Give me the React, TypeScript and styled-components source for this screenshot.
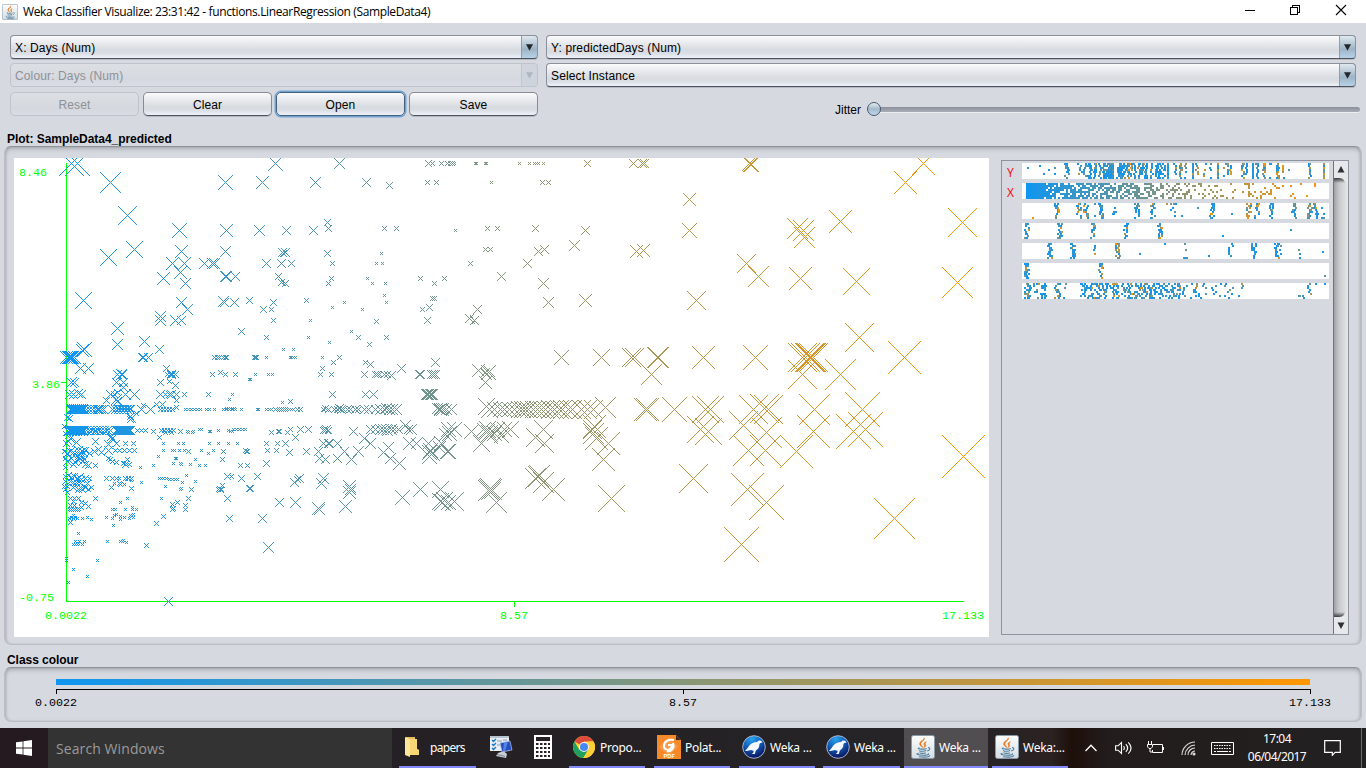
import React from "react";
import styled, { createGlobalStyle, css } from "styled-components";

const Global = createGlobalStyle`
  * { box-sizing: border-box; }
  html, body { margin: 0; padding: 0; overflow: hidden; }
  body { font-family: "Liberation Sans", Arial, sans-serif; font-size: 12px; color: #000; }
  svg { display: block; flex: none; }
`;

const Screen = styled.div`
  width: 1366px; height: 768px; display: flex; flex-direction: column; background: #d6d9e0; overflow: hidden;
`;
const TitleBar = styled.header`
  height: 23px; flex: none; background: #fff; display: flex; align-items: center; padding-left: 2px;
`;
const TitleText = styled.span`
  flex: 1; margin-left: 5px; font: 12px/22px "Open Sans", "Noto Sans", sans-serif; letter-spacing: -0.37px; white-space: pre;
`;
const WindowButtons = styled.div`
  display: flex; width: 138px; height: 23px;
  svg { width: 46px; height: 23px; }
`;

const Controls = styled.section`
  display: flex; gap: 8px; height: 93px; flex: none; padding: 12px 0 0 10px;
`;
const ControlColumn = styled.div<{ $w: number }>`
  width: ${p => p.$w}px; display: flex; flex-direction: column; gap: 4px; flex: none;
`;
const glossy = css`
  background: linear-gradient(#fbfbfc 0, #e9ebef 30%, #d8dbdf 62%, #d9dde4 78%, #eef1f8 100%);
`;
const Combo = styled.div<{ $disabled?: boolean }>`
  height: 24px; flex: none; display: flex; align-items: stretch; border-radius: 4px; overflow: hidden;
  border: 1px solid #8b909a; border-bottom-color: #4c515b; ${glossy}
  font-size: 12px; line-height: 24px; letter-spacing: 0.13px; padding-left: 4px;
  box-shadow: 0 1px 0 rgba(120, 125, 135, 0.35);
  ${p => p.$disabled && css`color: #8e9199; background: linear-gradient(#dcdfe4, #d5d8de 70%, #dadde5); border-color: #bfc3ca; box-shadow: none;`}
`;
const ComboText = styled.span`flex: 1; white-space: pre;`;
const ComboArrow = styled.span<{ $disabled?: boolean }>`
  width: 17px; margin: -1px; display: flex; align-items: center; justify-content: center;
  border: 1px solid #5d7d95; border-bottom-color: #1d3f5b; border-radius: 0 4px 4px 0;
  border-left-color: #8b9fae;
  background: linear-gradient(#dfe8ee 0, #adc0cf 45%, #9db4c7 60%, #b9d2e8 100%);
  ${p => p.$disabled && css`background: #cdd3dc; border-color: #bcc3cd; opacity: 0.85;`}
`;
const ButtonRow = styled.div`display: flex; gap: 4px; margin-top: 1px;`;
const PushButton = styled.div<{ $disabled?: boolean; $focused?: boolean }>`
  flex: 1; height: 24px; border-radius: 5px; text-align: center; line-height: 24px; letter-spacing: 0.1px;
  border: 1px solid #868b95; border-bottom: 1px solid #4d525c; ${glossy}
  box-shadow: 0 1px 0 rgba(120, 125, 135, 0.35);
  ${p => p.$disabled && css`color: #8e9199; background: linear-gradient(#dcdfe4, #d4d7dd 70%, #dadde5); border-color: #bfc3ca; box-shadow: none;`}
  ${p => p.$focused && css`border-color: #42617f; box-shadow: 0 0 0 1.5px #73a4d1;`}
`;
const JitterRow = styled.div`
  display: flex; align-items: center; height: 16px; margin: 11px -4px 0 289px; gap: 5px;
`;
const Slider = styled.div`
  flex: 1; height: 16px; display: flex; align-items: center; padding-left: 1px; margin-top: -1px;
`;
const SliderTrack = styled.div`
  height: 5px; flex: 1; border-radius: 3px; margin-left: -8px;
  background: linear-gradient(#8c909a, #a9adb8); box-shadow: 0 1px 0 #eceef0;
`;
const SliderThumb = styled.div`
  width: 14px; height: 14px; border-radius: 50%; border: 1px solid #45596e; z-index: 1;
  background: linear-gradient(#e5ecf1, #a4b9ca 50%, #c2d8eb);
`;

const GroupTitle = styled.h2`
  margin: 0; height: 30px; padding: 16px 0 0 7px; font: bold 12px/15px "Liberation Sans", Arial, sans-serif; letter-spacing: -0.05px; flex: none;
`;
const ClassTitle = styled(GroupTitle)`height: 22px; padding-top: 8px;`;
const GroupBox = styled.section<{ $h: number }>`
  height: ${p => p.$h}px; margin: 0 4px; flex: none; display: flex; border-radius: 7px;
  border: 1px solid #bbbec3; border-top: 1px solid #8f9296;
  box-shadow: inset 0 3px 4px -1px rgba(130, 133, 138, 0.5), inset 2px 0 3px -1px rgba(130, 133, 138, 0.4), inset -2px 0 3px -1px rgba(130, 133, 138, 0.4);
`;
const PlotBox = styled(GroupBox)`padding: 11px 12px 7px 9px; gap: 12px;`;
const PlotCanvas = styled.div`width: 975px; height: 479px; background: #fff; flex: none;`;
const AttributePanel = styled.div`
  width: 348px; height: 475px; margin-top: 2px; border: 1px solid #8f939d; display: flex; flex: none;
`;
const AttributeList = styled.div`
  flex: 1; display: flex; flex-direction: column; gap: 4px; padding-top: 2px;
`;
const AttributeRow = styled.div`display: flex; height: 16px;`;
const AttributeMark = styled.span`
  width: 20px; padding-left: 5px; color: #f00; font: 12px/20px "Open Sans", "Noto Sans", sans-serif;
`;
const Strip = styled.div`width: 307px; height: 16px; background: #fff;`;
const ScrollBar = styled.div`
  width: 15px; border-left: 1px solid #6f737a; display: flex; flex-direction: column; justify-content: space-between;
  background: linear-gradient(90deg, #9fa1a5, #c6c8cb 35%, #dcdddf 80%, #e7e8ea);
`;

const Taskbar = styled.footer`
  margin-top: 6px; height: 40px; flex: none; display: flex; background: linear-gradient(90deg, #241a20 0, #242023 28%, #262427 70%, #2b2221 77%, #1d0f0a 78.5%, #231c1c 81%, #222122 100%);
  color: #fff; font: 12px/38px "Noto Sans", "Open Sans", sans-serif;
`;
const StartButton = styled.div`width: 48px; padding: 12px 0 0 16px;`;
const SearchBox = styled.div`width: 344px; background: #333; color: #9a9a9a; font: 14px/41px "Open Sans", "Noto Sans", sans-serif; letter-spacing: 0.09px; padding-left: 8px;`;
const Task = styled.div<{ $w: number; $ml?: number; $pad?: number; $gap?: number; $active?: boolean; $running?: boolean }>`
  width: ${p => p.$w}px; margin-left: ${p => p.$ml ?? 0}px; padding-left: ${p => p.$pad ?? 3}px; flex: none;
  display: flex; align-items: center; gap: ${p => p.$gap ?? 5}px; white-space: pre; letter-spacing: -0.25px;
  background: ${p => (p.$active ? "#504e51" : "transparent")};
  border-bottom: 2px solid ${p => (p.$running ? "#8388fa" : "transparent")};
`;
const TaskLabel = styled.span<{ $tight?: boolean }>`
  line-height: 36px; padding-top: 2px; letter-spacing: ${p => (p.$tight ? "-0.7px" : "-0.25px")};
`;
const Tray = styled.div`display: flex; align-items: center; margin-left: 17px;`;
const TrayIcon = styled.div<{ $w: number }>`width: ${p => p.$w}px; flex: none; display: flex; justify-content: center;`;
const Clock = styled.div`
  width: 72px; flex: none; text-align: center; line-height: 18px; letter-spacing: -0.55px; padding-bottom: 1px; margin-left: 10px;
`;
const DesktopEdge = styled.div`margin-left: auto; width: 5px; flex: none; border-left: 1px solid #68676a;`;

/* ---------- plot data ---------- */

type Cross = [number, number, number];

const shade = (t: number) => {
  const k = Math.max(0, Math.min(1, t));
  return `rgb(${Math.round(15 + 240 * k)},150,${Math.round(240 - 240 * k)})`;
};

/* Points are stored in thirds of a pixel, relative to the corner of their tile. */
const tile = (ox: number, oy: number, data: string): Cross[] =>
  data.trim().split(/\s*;\s*/).filter(Boolean).map(item => {
    const [x, y, h] = item.split(" ").map(Number);
    return [ox + Math.floor(x / 3), oy + Math.floor(y / 3), h];
  });

const run = (x0: number, x1: number, step: number, y: number, h: number): Cross[] => {
  const out: Cross[] = [];
  for (let x = x0; x <= x1; x += step) out.push([Math.round(x), y, h]);
  return out;
};

const crosses: Cross[] = [
  ...tile(0, 150, `214 40 12;232 40 12;331 97 10;382 196 9;538 241 7;676 97 7;679 241 6;403 298 8;325 322 8;544 304 6;676 304 5;
517 340 6;553 340 6;541 367 6;490 385 6;556 400 5;613 340 5;637 340 5;643 340 5;676 379 5;679 379 5;706 379 4;250 451 8;544 457 5;562 478 5;
670 454 5;673 457 4;703 457 4;748 451 3;481 499 5;481 511 5;526 511 5;544 511 4;352 535 6;352 583 5;433 574 5;478 598 4;724 544 3;
253 598 7;247 601 6;199 622 6;205 622 6;208 622 6;214 622 6;217 622 6;223 622 6;211 622 6;427 622 4;430 622 4;446 622 4;
643 622 2;652 622 2;658 622 2;670 622 2;676 622 2;679 622 2;766 622 2;769 622 2;240 655 5;265 655 5;364 673 5;367 673 4;352 673 4;348 697 4;370 697 4;
499 655 3;511 673 3;517 673 3;514 673 4;502 673 2;526 673 3;481 697 3;508 694 2;526 706 3;637 673 2;661 667 2;676 673 2;706 673 2;766 673 1;748 688 1;751 688 1;
215 697 5;223 697 4;208 734 4;220 734 4;235 730 4;244 734 4;331 734 4;352 727 3;376 734 5;403 734 4;481 734 4;495 734 2;508 734 3;514 734 4;529 734 3;553 734 2;625 734 2;697 734 1`),
  ...tile(0, 390, `376 13 5;403 13 5;370 -8 4;343 13 3;318 31 3;353 34 4;349 28 5;469 43 2;487 43 3;529 31 2;688 28 1;
207 86 3;202 83 3;391 80 3;391 89 3;394 86 4;215 142 4;211 145 5;331 142 3;337 145 4;334 139 3;479 142 2;460 124 2;424 58 4;451 58 4;430 46 2;409 70 2;
200 160 3;205 154 3;229 157 4;286 154 3;325 163 4;349 160 3;376 160 2;400 160 2;490 160 1;535 160 1;550 160 1;628 160 1;655 160 1;685 160 1;712 160 1;
193 184 2;202 190 4;211 184 4;220 187 4;235 181 4;241 187 4;247 184 4;256 181 3;268 190 3;283 184 3;295 178 3;304 187 3;325 181 4;346 181 2;358 181 2;373 181 2;388 181 2;403 181 2;
490 181 1;517 181 1;523 181 1;538 181 1;553 181 1;565 184 2;604 181 1;625 190 1;640 181 1;670 184 2;736 181 2;739 184 2;742 184 2;475 199 1;526 205 1;529 205 1;586 208 1;667 208 2;
196 205 2;202 214 4;214 205 3;220 223 3;232 208 4;241 205 4;247 214 4;253 208 3;256 223 3;265 226 3;286 226 2;196 232 2;244 196 4;238 196 4;226 217 3;331 208 2;325 205 2;337 214 2;349 217 2;370 220 2;376 223 3;382 208 2;379 220 2;388 223 2;421 232 1;460 226 1;520 220 1;541 220 1;544 223 1;571 223 1;598 226 1;616 226 1;721 226 2;742 226 2;
205 256 3;214 262 3;223 259 3;232 265 3;238 262 4;244 268 3;256 265 3;268 265 2;211 274 3;220 277 3;229 277 3;241 280 3;262 280 3;196 259 2;196 274 2;193 289 2;196 298 2;202 307 2;202 289 2;220 292 3;235 298 3;244 295 3;247 298 3;256 292 3;265 298 2;274 292 2;
320 265 2;337 265 2;349 265 2;358 265 1;376 265 2;394 265 2;385 265 2;343 280 1;361 283 2;358 280 2;373 283 1;379 268 1;394 271 1;334 292 2;394 295 2;424 277 1;478 265 1;484 265 1;490 265 1;499 265 1;508 268 1;517 268 1;526 268 1;532 268 1;559 256 1;547 278 1;586 274 1;496 289 1;541 298 1;544 295 1;574 298 2;682 259 3;694 259 2;724 265 3;771 259 3;667 286 2;661 298 3;664 298 2;655 298 2;751 295 3;
212 325 2;223 325 2;235 325 2;286 325 2;382 325 1;484 325 1;565 325 2;682 325 3;220 334 2;244 337 2;256 340 2;361 337 1;532 337 2;517 343 2;556 346 2;517 358 2;519 355 2;556 358 2;244 352 2;265 349 2;211 346 2;223 346 2;208 358 1;214 358 2;220 358 2;226 358 2;232 358 2;238 358 1;337 358 1;347 358 1;376 358 1;397 352 1;397 358 1;409 358 1;
208 385 1;214 382 1;220 385 2;226 382 1;232 385 1;247 385 1;262 382 1;274 388 1;211 397 2;220 376 1;319 382 1;337 385 1;343 376 1;361 379 1;373 382 1;349 373 1;391 376 1;400 373 1;400 382 1;388 385 1;361 388 1;340 406 1;490 379 2;469 400 2;688 385 3;235 430 1;220 463 1;226 454 1;232 463 1;238 454 1;247 463 1;253 454 1;226 463 1;235 460 1;322 454 1;361 454 1;367 454 1;370 451 1;379 457 1;439 466 2;199 505 1;199 511 1;292 511 1;220 538 1;262 559 1;205 577 1;505 634 4`),
  /* the two near-solid bands */
  ...run(70, 83, 1, 409, 4), ...run(71, 83, 2, 408, 4), ...run(86, 103, 3, 409, 4), ...run(95, 103, 2, 409, 4), ...run(112, 130, 3, 409, 4), ...run(118, 130, 3, 408, 3),
  ...run(160, 173, 3, 409, 2), [176, 407, 2], ...run(185, 200, 3, 409, 1), ...run(206, 210, 3, 409, 1), [214, 409, 1], ...run(223, 237, 3, 409, 1), ...run(226, 235, 2, 408, 1), [241, 409, 1],
  [64, 426, 2], [65, 433, 2], ...run(69, 83, 1, 430, 4), ...run(68, 83, 3, 431, 4), ...run(86, 111, 3, 430, 4), ...run(90, 108, 5, 431, 3), ...run(116, 130, 1, 430, 4), ...run(137, 148, 4, 430, 2),
  ...run(161, 173, 3, 430, 2), [165, 432, 2], [171, 432, 2], [180, 431, 2], [187, 431, 1], [188, 432, 1], [193, 431, 1], [192, 432, 1], [199, 429, 1], [201, 429, 1], [209, 431, 1], [210, 431, 1], [218, 430, 1], [228, 430, 1], [230, 431, 1], [232, 431, 1], ...run(233, 246, 3, 429, 1),

  ...tile(250, 150, `76 40 7;268 40 5;37 97 6;196 97 5;349 97 4;418 106 3;535 40 3;547 40 2;574 40 2;592 40 2;601 40 2;607 40 2;613 40 1;676 40 1;679 40 1;706 40 1;709 40 1;808 40 1;838 40 1;853 40 1;859 40 1;865 40 1;880 40 1;1012 40 3;
532 97 2;559 97 2;724 97 1;877 97 2;895 97 2;28 241 5;109 241 4;190 241 4;232 217 3;235 235 3;403 235 2;439 235 2;616 241 1;712 235 2;742 235 2;856 235 3;1006 241 4;973 286 5;
97 307 4;106 307 4;100 310 3;232 310 3;394 310 1;706 298 2;721 298 2;865 304 4;883 298 4;49 340 4;94 340 4;124 340 3;247 340 2;379 340 1;397 340 1;661 340 2;832 340 4;
85 379 3;94 397 3;106 400 3;97 394 1;103 403 1;244 385 2;235 400 2;352 385 1;367 400 1;406 400 1;511 385 2;583 385 2;553 400 2;754 379 4;880 400 5;
403 436 1;409 457 1;547 445 2;553 445 2;283 457 1;169 451 2;70 457 3;-2 451 3;247 472 1;337 478 1;40 478 3;64 478 2;517 478 2;538 472 3;682 478 4;895 457 5;1006 451 6;
70 511 2;181 511 1;379 514 2;532 511 3;658 505 4;664 499 1;673 511 4;670 517 1;304 544 1;49 562 2;175 562 1;325 562 2;409 562 2;238 577 1;358 583 2;
100 598 1;130 598 1;13 622 2;19 622 2;49 622 1;121 622 1;124 622 1;130 622 1;136 622 1;217 622 1;268 622 2;934 622 7;1054 622 8;250 637 2;346 637 2;361 643 3;217 655 2;454 655 4;556 637 4;
16 673 1;55 673 1;67 673 1;211 673 2;244 673 2;343 673 3;376 673 3;382 673 3;388 673 2;403 673 3;412 673 3;424 676 4;508 673 4;511 673 4;544 673 4;550 673 4;556 673 4;550 667 1;
685 661 6;706 667 4;715 667 7;718 664 5;709 673 5;706 697 6;-2 688 1;247 734 3;346 734 3;370 734 4;529 734 5;532 734 5;535 734 5;541 734 5;544 734 5;547 734 5`),
  ...tile(250, 390, `25 58 1;22 58 1;49 58 1;58 58 1;64 58 1;76 58 2;82 58 1;88 58 2;94 58 2;100 58 2;106 58 2;112 58 1;118 58 1;124 58 1;130 58 1;142 58 2;151 58 2;97 37 1;121 34 2;
220 58 2;226 55 3;235 58 3;253 58 3;262 58 3;268 55 4;274 58 4;280 58 3;292 58 3;301 58 3;316 58 4;325 58 3;343 58 4;355 58 4;376 58 4;391 58 5;403 58 4;409 55 5;418 58 5;427 58 5;439 58 5;
562 55 5;568 58 5;571 58 6;577 58 6;580 55 5;589 58 5;604 58 5;
64 127 2;85 124 2;88 124 2;112 127 2;121 118 2;151 118 3;175 118 3;136 142 3;219 121 3;223 118 3;229 118 4;235 121 3;310 124 4;343 145 5;361 118 4;376 118 4;391 118 5;400 118 5;409 118 5;412 121 5;424 118 5;433 118 3;445 118 4;466 106 5;475 118 4;484 118 5;
49 160 2;82 160 2;106 160 3;52 181 2;79 181 2;118 187 3;169 184 3;220 160 4;235 160 4;238 160 4;262 160 4;206 184 4;284 184 4;325 184 5;361 160 5;49 220 3;22 259 3;208 205 4;226 208 4;262 205 4;304 208 5;
400 187 5;415 172 5;421 205 5;448 220 6;478 160 6;499 160 5;535 160 6;541 181 7;538 187 7;547 190 7;538 199 7;592 184 7;595 184 7;574 160 7;568 172 6;595 118 7;598 130 7;613 118 7;586 133 6;664 124 7;694 160 8;700 118 6;706 124 7;712 118 8;709 127 8;718 130 8;718 136 8;733 130 7;742 118 7;754 136 7;763 118 7;781 118 8;
880 118 9;856 142 9;883 160 9;1027 118 9;1030 130 10;1039 145 11;1033 109 11;1076 160 11;1060 208 11;
134 277 4;148 265 4;142 268 3;220 265 5;214 280 5;298 290 6;298 307 6;301 298 5;88 337 4;136 337 5;205 355 6;208 358 5;286 349 6;37 385 4;55 472 5;-2 295 3;
511 298 7;457 322 7;571 298 8;571 334 8;577 337 8;583 331 8;595 337 7;613 334 9;715 301 10;718 298 10;721 295 10;724 298 10;727 301 8;739 337 10;
856 265 10;865 259 10;868 256 10;880 277 10;910 298 11;1084 325 13;
709 49 8;718 58 8;733 58 7;751 58 7;763 58 7;778 58 7;793 58 7;808 58 8;817 58 8;826 58 8;835 58 8;850 58 8;862 58 8;874 58 8;886 58 8;901 58 9;913 58 8;928 58 9;937 58 9;955 58 9;967 58 9;994 58 9;1012 58 9;1030 58 9;1066 52 10`),
  ...tile(610, 150, `70 40 4;97 40 4;103 40 4;238 148 6;238 241 7;79 304 6;100 301 6;259 451 9;409 340 9;445 379 10;571 385 11;739 394 13;691 214 11;562 235 10;580 241 10;583 262 10;1057 217 14;1042 397 15;886 97 11;940 40 11;418 40 7;421 43 7;424 43 7;
64 622 9;73 622 9;142 622 10;145 622 10;124 673 10;280 622 11;436 622 12;577 622 14;586 622 14;598 622 14;604 622 14;610 622 14;601 622 14;577 673 14;691 673 15;748 562 14;883 622 16;
106 778 11;112 778 11;193 778 12;286 778 13;301 778 13;271 838 13;295 844 13;430 778 14;463 775 14;475 778 14;400 826 14;469 847 15;415 901 15;466 901 15;559 904 16;613 778 15;610 844 16;757 778 17;730 844 17;766 838 17;
250 985 14;412 1018 16;469 1057 17;394 1183 17;853 1105 20;1060 919 21`),
];

const crossPath = ([x, y, h]: Cross) => {
  let d = "";
  for (let i = -h; i <= h; i++) {
    if (y + i >= 158) d += `M${x + i} ${y + i}h1v1h-1z`;
    if (y - i >= 158 && i !== 0) d += `M${x + i} ${y - i}h1v1h-1z`;
  }
  return d;
};

const AxisText = ({ x, y, w, children, color = "#0f0" }: { x: number; y: number; w: number; children: string; color?: string }) => (
  <text x={x} y={y} textLength={w} fill={color} fontSize="11.7" fontFamily="'Liberation Mono', monospace">{children}</text>
);

const ScatterPlot = () => (
  <svg width="975" height="479" viewBox="14 158 975 479">
    <g shapeRendering="crispEdges">
      <path d="M66 163h1v439h-1zM66 601h898v1H66zM61 382h5v1h-5zM514 602h1v5h-1z" fill="#0f0" />
      {crosses.map((c, i) => <path key={i} d={crossPath(c)} fill={shade((c[0] - 66) / 897)} />)}
    </g>
    <AxisText x={19} y={176} w={28}>8.46</AxisText>
    <AxisText x={32} y={388} w={28}>3.86</AxisText>
    <AxisText x={19} y={601} w={35}>-0.75</AxisText>
    <AxisText x={45} y={619} w={42}>0.0022</AxisText>
    <AxisText x={500} y={619} w={28}>8.57</AxisText>
    <AxisText x={942} y={619} w={42}>17.133</AxisText>
  </svg>
);

/* ---------- attribute strips ---------- */

const random = (seed: number) => () => {
  seed = (seed * 1664525 + 1013904223) >>> 0;
  return seed / 4294967296;
};

type Column = [x: number, width: number, count: number, warm: number];

const stripColumns: Column[][] = [
  [[5, 0, 1, 0], [17, 0, 1, 0], [21, 0, 1, 0], [26, 0, 1, 0], [32, 0, 2, 0], [44, 4, 13, .1], [57, 5, 6, .1], [62, 3, 7, .1], [67, 4, 18, 0], [72, 3, 13, .2], [77, 3, 9, .1], [84, 8, 44, 0], [89, 3, 17, .2], [96, 5, 16, 0], [101, 9, 38, .1], [107, 5, 20, .3], [112, 3, 8, 0], [117, 5, 15, .2], [122, 5, 20, .1], [129, 3, 8, .3], [135, 5, 22, 0], [140, 5, 14, 0], [145, 1, 12, 0], [152, 3, 6, .2], [158, 2, 12, .4], [162, 3, 5, .3], [170, 1, 13, .2], [174, 3, 6, .5], [182, 2, 5, .7], [187, 3, 4, .2], [195, 1, 10, .3], [203, 4, 7, .2], [207, 4, 6, .7], [220, 3, 11, .6], [224, 2, 6, .2], [230, 1, 9, .1], [234, 2, 9, .1], [241, 3, 12, .7], [247, 3, 3, 0], [255, 3, 16, .5], [260, 2, 5, .8], [266, 0, 1, 0], [287, 2, 9, .4], [301, 1, 12, .8]],
  [],
  [[10, 0, 1, .7], [34, 5, 13, .5], [56, 5, 12, .4], [63, 5, 15, .5], [72, 1, 2, 0], [78, 5, 16, .2], [92, 4, 5, 0], [114, 5, 14, .1], [130, 5, 16, .3], [146, 5, 3, .5], [152, 5, 5, 0], [159, 1, 1, 0], [175, 1, 1, 0], [189, 5, 18, .2], [209, 1, 1, 0], [226, 5, 18, .6], [234, 5, 11, .2], [249, 5, 12, .1], [271, 5, 13, .1], [287, 5, 18, .2], [293, 4, 14, .2], [300, 4, 5, 0]],
  [[4, 4, 16, .1], [37, 5, 17, .4], [70, 4, 15, .3], [103, 4, 16, .1], [137, 4, 16, .3], [200, 0, 1, 0], [268, 0, 1, 0]],
  [[27, 5, 17, .2], [50, 5, 17, .2], [72, 5, 4, .4], [95, 4, 18, .6], [117, 0, 1, 0], [142, 1, 1, 0], [162, 4, 5, 0], [186, 0, 1, 0], [208, 5, 7, 0], [231, 5, 14, 0], [255, 6, 18, .1], [277, 2, 4, .1], [300, 0, 1, 0]],
  [[4, 5, 22, .1], [78, 4, 11, .4], [302, 0, 1, 0]],
  [[5, 6, 24, .3], [17, 12, 26, .3], [34, 7, 16, .2], [42, 3, 4, 0], [62, 8, 20, .1], [70, 9, 27, .1], [80, 10, 28, .2], [92, 10, 28, .2], [104, 10, 25, .1], [117, 12, 32, .2], [129, 12, 32, .1], [142, 12, 29, .2], [153, 10, 23, .1], [165, 11, 8, .3], [177, 13, 15, .2], [194, 10, 7, .2], [208, 14, 8, .2], [218, 4, 4, .4], [276, 4, 2, 0], [284, 8, 8, .1], [293, 0, 1, 0], [302, 0, 1, 0]],
];

const stripPoints = (row: number): [number, number, number][] => {
  const rnd = random(77 + row * 911);
  const points: [number, number, number][] = [];
  if (row === 1) {
    for (let cx = 0; cx < 150; cx++) {
      const t = cx / 149;
      const density = t < 0.055 ? 0.98 : t < 0.085 ? 0.8 : t < 0.4 ? 0.72 - t * 0.55 : t < 0.49 ? 0.42 : t < 0.6 ? 0.27 : t < 0.84 ? 0.13 : 0.035;
      for (let y = 0; y < 8; y++) if (rnd() < density) points.push([4 + cx * 2, y * 2, t]);
    }
    return points;
  }
  for (const [x, w, n, warm] of stripColumns[row]) {
    for (let i = 0; i < n; i++) {
      const y = n < 6 ? Math.floor(rnd() * 8) * 2 : (i % 8) * 2;
      const px = Math.round(x + (rnd() - 0.5) * w);
      const t = rnd() < warm ? 0.35 + rnd() * 0.6 : rnd() < 0.6 ? rnd() * 0.1 : rnd() * 0.38;
      points.push([px, y, t]);
    }
  }
  return points;
};

const AttributeStrip = ({ row }: { row: number }) => (
  <Strip>
    <svg width="307" height="16" shapeRendering="crispEdges">
      {stripPoints(row).map(([x, y, t], i) => <rect key={i} x={x} y={y} width="2" height="2" fill={shade(t)} />)}
    </svg>
  </Strip>
);

/* ---------- icons ---------- */

const JavaIcon = ({ w, h }: { w: number; h: number }) => (
  <svg width={w} height={h} viewBox="0 0 24 24" preserveAspectRatio="none">
    <defs>
      <linearGradient id="javaTile" x1="0" y1="0" x2="0" y2="1"><stop offset="0" stopColor="#fdfdfd" /><stop offset="1" stopColor="#d3dde3" /></linearGradient>
    </defs>
    <rect x=".5" y=".5" width="23" height="23" rx="2" fill="url(#javaTile)" stroke="#8799a6" />
    <path d="M13.2 2.8c1.4 2.6-3.8 4-3.2 6.4.3 1.3 1.5 2.2 2.1 3.4-2.2-1.2-4.1-2.6-3.4-4.6.8-2 4.3-2.9 4.500-5.200zM15.500 6.600c-2.400 1-3.200 2-2.200 3.500.6 1 .2 1.800-.5 2.500 1.600-.7 2.500-1.700 1.700-2.900-.6-1-.1-1.900 1-3.100z" fill="#e8781e" stroke="#e8781e" strokeWidth=".5" />
    <path d="M8.500 12.800c-3 .8 0 1.400 3.500 1.300 1.800 0 3-.3 3.700-.6M8.500 15.300c-.8 1 4.300 1.300 6.700.3M9 17.500c-.5 1 3.800 1.200 5.800.2M17 12.700c2.500-.4 2.500 2.300-.8 3.300M7.500 18.300c-4 .8.5 2 5 1.900 3.500 0 6-.8 4.600-1.600M8 21.700c5 .7 10 .2 11-1.300" fill="none" stroke="#4f7d9c" strokeWidth="1.100" />
  </svg>
);

const BirdIcon = () => (
  <svg width="24" height="24" viewBox="0 0 24 24">
    <defs>
      <radialGradient id="birdDisc" cx=".4" cy=".15" r=".9"><stop offset="0" stopColor="#2aa4ef" /><stop offset=".5" stopColor="#1257b2" /><stop offset="1" stopColor="#080b55" /></radialGradient>
    </defs>
    <circle cx="12" cy="12" r="11.300" fill="url(#birdDisc)" stroke="#b5c0d6" strokeWidth=".9" />
    <path d="M20.800 7.300c-.9-.2-1.300-1.500-2.800-1.700-1.300-.1-2.100.6-2.900 1.500-3 0-6 1.200-7.700 3.400-1.300 1.800-2.500 3.600-4.400 5.200 2 .5 4.200-.1 6-.7.8.5 1.800.7 2.800.7l-.7 2.200-1.500 1h3.200l1-3.500c2-.9 3.200-2.500 3.500-4.600 0-1.400.2-2.200 1.100-2.800.8-.3 1.600-.3 2.400-.7z" fill="#f4f8ff" />
  </svg>
);

const ComboTriangle = ({ faded }: { faded?: boolean }) => (
  <svg width="7" height="7" viewBox="0 0 7 7"><path d="M0 .3h7L3.500 6.700z" fill={faded ? "#aab0b9" : "#22272c"} /></svg>
);

const Dropdown = ({ label, disabled }: { label: string; disabled?: boolean }) => (
  <Combo $disabled={disabled}>
    <ComboText>{label}</ComboText>
    <ComboArrow $disabled={disabled}><ComboTriangle faded={disabled} /></ComboArrow>
  </Combo>
);

const ScrollCap = ({ down }: { down?: boolean }) => (
  <svg width="14" height="25" viewBox="0 0 14 25">
    <defs>
      <linearGradient id="capShade" x1="0" y1="0" x2="0" y2="1"><stop offset="0" stopColor="#3c3d40" /><stop offset="1" stopColor="#3c3d40" stopOpacity="0" /></linearGradient>
    </defs>
    <g transform={down ? "matrix(1 0 0 -1 0 25)" : undefined}>
      <path d="M0 17h9l2 5H0z" fill="url(#capShade)" />
      <path d="M0 0h14v25c-2-5-5-8-9-8H0z" fill="#e6e8eb" />
      <path d="M3.500 11.500L7 5l3.500 6.500z" fill="#2e3135" />
    </g>
  </svg>
);

export default function App() {
  return (
    <Screen>
      <Global />
      <TitleBar>
        <JavaIcon w={16} h={16} />
        <TitleText>Weka Classifier Visualize: 23:31:42 - functions.LinearRegression (SampleData4)</TitleText>
        <WindowButtons>
          <svg shapeRendering="crispEdges"><path d="M17 10h10v1H17z" /></svg>
          <svg shapeRendering="crispEdges"><path d="M16.500 7.500h7v7h-7zM18.500 7V5.500h7v7H24" fill="none" stroke="#000" /></svg>
          <svg><path d="M16 5l10 10M26 5L16 15" fill="none" stroke="#000" strokeWidth="1.100" /></svg>
        </WindowButtons>
      </TitleBar>

      <Controls>
        <ControlColumn $w={528}>
          <Dropdown label="X: Days (Num)" />
          <Dropdown label="Colour: Days (Num)" disabled />
          <ButtonRow>
            <PushButton $disabled>Reset</PushButton>
            <PushButton>Clear</PushButton>
            <PushButton $focused>Open</PushButton>
            <PushButton>Save</PushButton>
          </ButtonRow>
        </ControlColumn>
        <ControlColumn $w={810}>
          <Dropdown label="Y: predictedDays (Num)" />
          <Dropdown label="Select Instance" />
          <JitterRow>
            <span>Jitter</span>
            <Slider><SliderThumb /><SliderTrack /></Slider>
          </JitterRow>
        </ControlColumn>
      </Controls>

      <GroupTitle>Plot: SampleData4_predicted</GroupTitle>
      <PlotBox $h={499}>
        <PlotCanvas><ScatterPlot /></PlotCanvas>
        <AttributePanel>
          <AttributeList>
            {stripColumns.map((_, row) => (
              <AttributeRow key={row}>
                <AttributeMark>{row === 0 ? "Y" : row === 1 ? "X" : ""}</AttributeMark>
                <AttributeStrip row={row} />
              </AttributeRow>
            ))}
          </AttributeList>
          <ScrollBar><ScrollCap /><ScrollCap down /></ScrollBar>
        </AttributePanel>
      </PlotBox>

      <ClassTitle>Class colour</ClassTitle>
      <GroupBox $h={55}>
        <svg width="1356" height="53" viewBox="5 668 1356 53">
          <defs>
            <linearGradient id="classRamp"><stop offset="0" stopColor={shade(0)} /><stop offset="1" stopColor={shade(1)} /></linearGradient>
          </defs>
          <rect x="56" y="679" width="1254" height="6" fill="url(#classRamp)" />
          <path d="M56 689h1255v1H56zM56 690h1v4h-1zM683 690h1v4h-1zM1310 690h1v4h-1z" shapeRendering="crispEdges" />
          <AxisText x={35} y={706} w={42} color="#000">0.0022</AxisText>
          <AxisText x={669} y={706} w={28} color="#000">8.57</AxisText>
          <AxisText x={1289} y={706} w={42} color="#000">17.133</AxisText>
        </svg>
      </GroupBox>

      <Taskbar>
        <StartButton>
          <svg width="16" height="16" viewBox="0 0 16 16" fill="#fff"><path d="M0 2.300l6.600-.9v6.200H0zM7.400 1.300L16 0v7.600H7.400zM0 8.400h6.600v6.200L0 13.700zM7.400 8.400H16V16l-8.600-1.200z" /></svg>
        </StartButton>
        <SearchBox>Search Windows</SearchBox>
        <Task $w={77} $ml={7} $pad={6} $gap={11} $running>
          <svg width="14" height="20" viewBox="0 0 14 20"><path d="M1 0h9v2h2v10l2 1v5H4L1 17z" fill="#e6bd55" /><path d="M0 0l5 2v18l-5-2z" fill="#ffe699" /><path d="M5 2h7v10l2 1v5H5z" fill="#f7d774" /></svg>
          <TaskLabel $tight>papers</TaskLabel>
        </Task>
        <Task $w={44} $ml={10} $pad={4}>
          <svg width="23" height="22" viewBox="0 0 23 22">
            <path d="M0 0h19v15H0z" fill="#e9eff5" /><path d="M0 0h19v2H0z" fill="#b7c3cf" />
            <path d="M2 4l1.500 1.500L6 3M2 8l1.500 1.500L6 7M2 12l1.500 1.500L6 11" stroke="#1976c8" strokeWidth="1.300" fill="none" /><path d="M7 5h5M7 9h3M13 4h4" stroke="#8c9aa8" />
            <path d="M10 7l10-2 2 9-10 2z" fill="#2450c4" stroke="#b9c4e8" strokeWidth=".7" /><path d="M14 6.300l4-.8-3 9.600-2 .4z" fill="#6f98f0" opacity=".7" />
            <path d="M11 16l3-.6 3 2.600-1 4-10-2 2-3z" fill="#c8ced5" /><path d="M7 18.500l8 1.800" stroke="#7c858f" />
          </svg>
        </Task>
        <Task $w={39} $pad={4}>
          <svg width="18" height="24" viewBox="0 0 18 24"><path d="M0 0h18v24H0z" fill="#fff" /><path d="M2 2h14v4H2zM2 8h2.500v2H2zM6 8h2.500v2H6zM10 8h2.500v2H10zM14 8h2v2h-2zM2 12h2.500v2H2zM6 12h2.500v2H6zM10 12h2.500v2H10zM14 12h2v2h-2zM2 16h2.500v2H2zM6 16h2.500v2H6zM10 16h2.500v2H10zM14 16h2v2h-2zM2 20h2.500v2H2zM6 20h2.500v2H6zM10 20h2.500v2H10zM14 20h2v2h-2z" fill="#242023" /></svg>
        </Task>
        <Task $w={76} $pad={4} $running>
          <svg width="22" height="22" viewBox="0 0 22 22">
            <circle cx="11" cy="11" r="11" fill="#fdd035" />
            <path d="M11 11L1.500 5.500A11 11 0 0 1 20.500 5.500H11z" fill="#dd4b3e" />
            <path d="M1.500 5.500A11 11 0 0 0 10.300 22l5-8.500H11L6.200 13.700z" fill="#1fa15d" />
            <path d="M20.500 5.500A11 11 0 0 1 10.300 22l5.400-8.500L15 5.500z" fill="#fdd035" />
            <circle cx="11" cy="11" r="5" fill="#f4f6fa" /><circle cx="11" cy="11" r="4" fill="#4587f3" />
          </svg>
          <TaskLabel>Propo...</TaskLabel>
        </Task>
        <Task $w={76} $ml={9} $pad={3} $gap={4} $running>
          <svg width="24" height="24" viewBox="0 0 24 24">
            <path d="M0 0h19l5 5v19H0z" fill="#f6892a" /><path d="M19 0v5h5z" fill="#3a2717" /><path d="M2 12L12 2l9 9-9 10z" fill="#fff" opacity=".16" />
            <path d="M17 5c-5-1-10 1-10 6 0 4 5 5 7 2l1-3h-4M16 8c2 5-2 9-6 8" stroke="#fff" strokeWidth="2" fill="none" />
            <text x="6.500" y="22.500" fontSize="5.500" fontWeight="bold" fontFamily="'Liberation Sans', sans-serif" fill="#fff" textLength="11">PDF</text>
          </svg>
          <TaskLabel>Polat...</TaskLabel>
        </Task>
        <Task $w={76} $ml={9} $pad={3} $gap={4} $running><BirdIcon /><TaskLabel>Weka ...</TaskLabel></Task>
        <Task $w={77} $ml={8} $pad={3} $gap={4} $running><BirdIcon /><TaskLabel>Weka ...</TaskLabel></Task>
        <Task $w={84} $ml={4} $pad={7} $gap={4} $active $running><JavaIcon w={24} h={24} /><TaskLabel>Weka ...</TaskLabel></Task>
        <Task $w={76} $ml={4} $pad={3} $gap={4} $running><JavaIcon w={24} h={24} /><TaskLabel>Weka:...</TaskLabel></Task>
        <Tray>
          <TrayIcon $w={12}><svg width="12" height="8" fill="none" stroke="#fff" strokeWidth="1.300"><path d="M.5 7L6 1.300 11.500 7" /></svg></TrayIcon>
          <TrayIcon $w={52}><svg width="17" height="14" fill="none" stroke="#fff" strokeWidth="1.100"><path d="M.6 4.800h2.500L6.500 1.500v11L3.100 9.200H.6zM8.500 5c1 1.200 1 2.800 0 4M10.800 3.200c2.300 2.300 2.300 5.300 0 7.600M13.300 1.300c3.400 3.500 3.400 7.900 0 11.400" /></svg></TrayIcon>
          <TrayIcon $w={13}><svg width="17" height="14" fill="none" stroke="#fff"><path d="M6 3.500h9.500v8H5.500V9M16.500 6v3M1.500 0v3M4.500 0v3M.5 3.500h5v2.300L4 7.500H2L.5 5.800zM3 7.500V11h2" /></svg></TrayIcon>
          <TrayIcon $w={52}><svg width="15" height="15" fill="none" stroke="#ddd" strokeWidth="1.100"><path d="M1 14C1 7 7 1 14 1M4 14C4 9 9 4 14 4M7 14c0-4 3-7 7-7M10 14c0-2 2-4 4-4" /><circle cx="13" cy="13" r="1" fill="#fff" /></svg></TrayIcon>
          <TrayIcon $w={17}><svg width="23" height="13" fill="none" stroke="#fff"><path d="M.5.5h22v12H.5z" /><path d="M3 3.500h17M3 6.500h17" strokeDasharray="1.500 1" /><path d="M3 9.500h2M6 9.500h11M18 9.500h2" /></svg></TrayIcon>
          <Clock>17:04<br />06/04/2017</Clock>
          <TrayIcon $w={38}><svg width="17" height="16" fill="none" stroke="#fff" strokeWidth="1.200"><path d="M.7.7h15.600v11.600H11L8.300 15.300V12.300H.7z" /></svg></TrayIcon>
        </Tray>
        <DesktopEdge />
      </Taskbar>
    </Screen>
  );
}
